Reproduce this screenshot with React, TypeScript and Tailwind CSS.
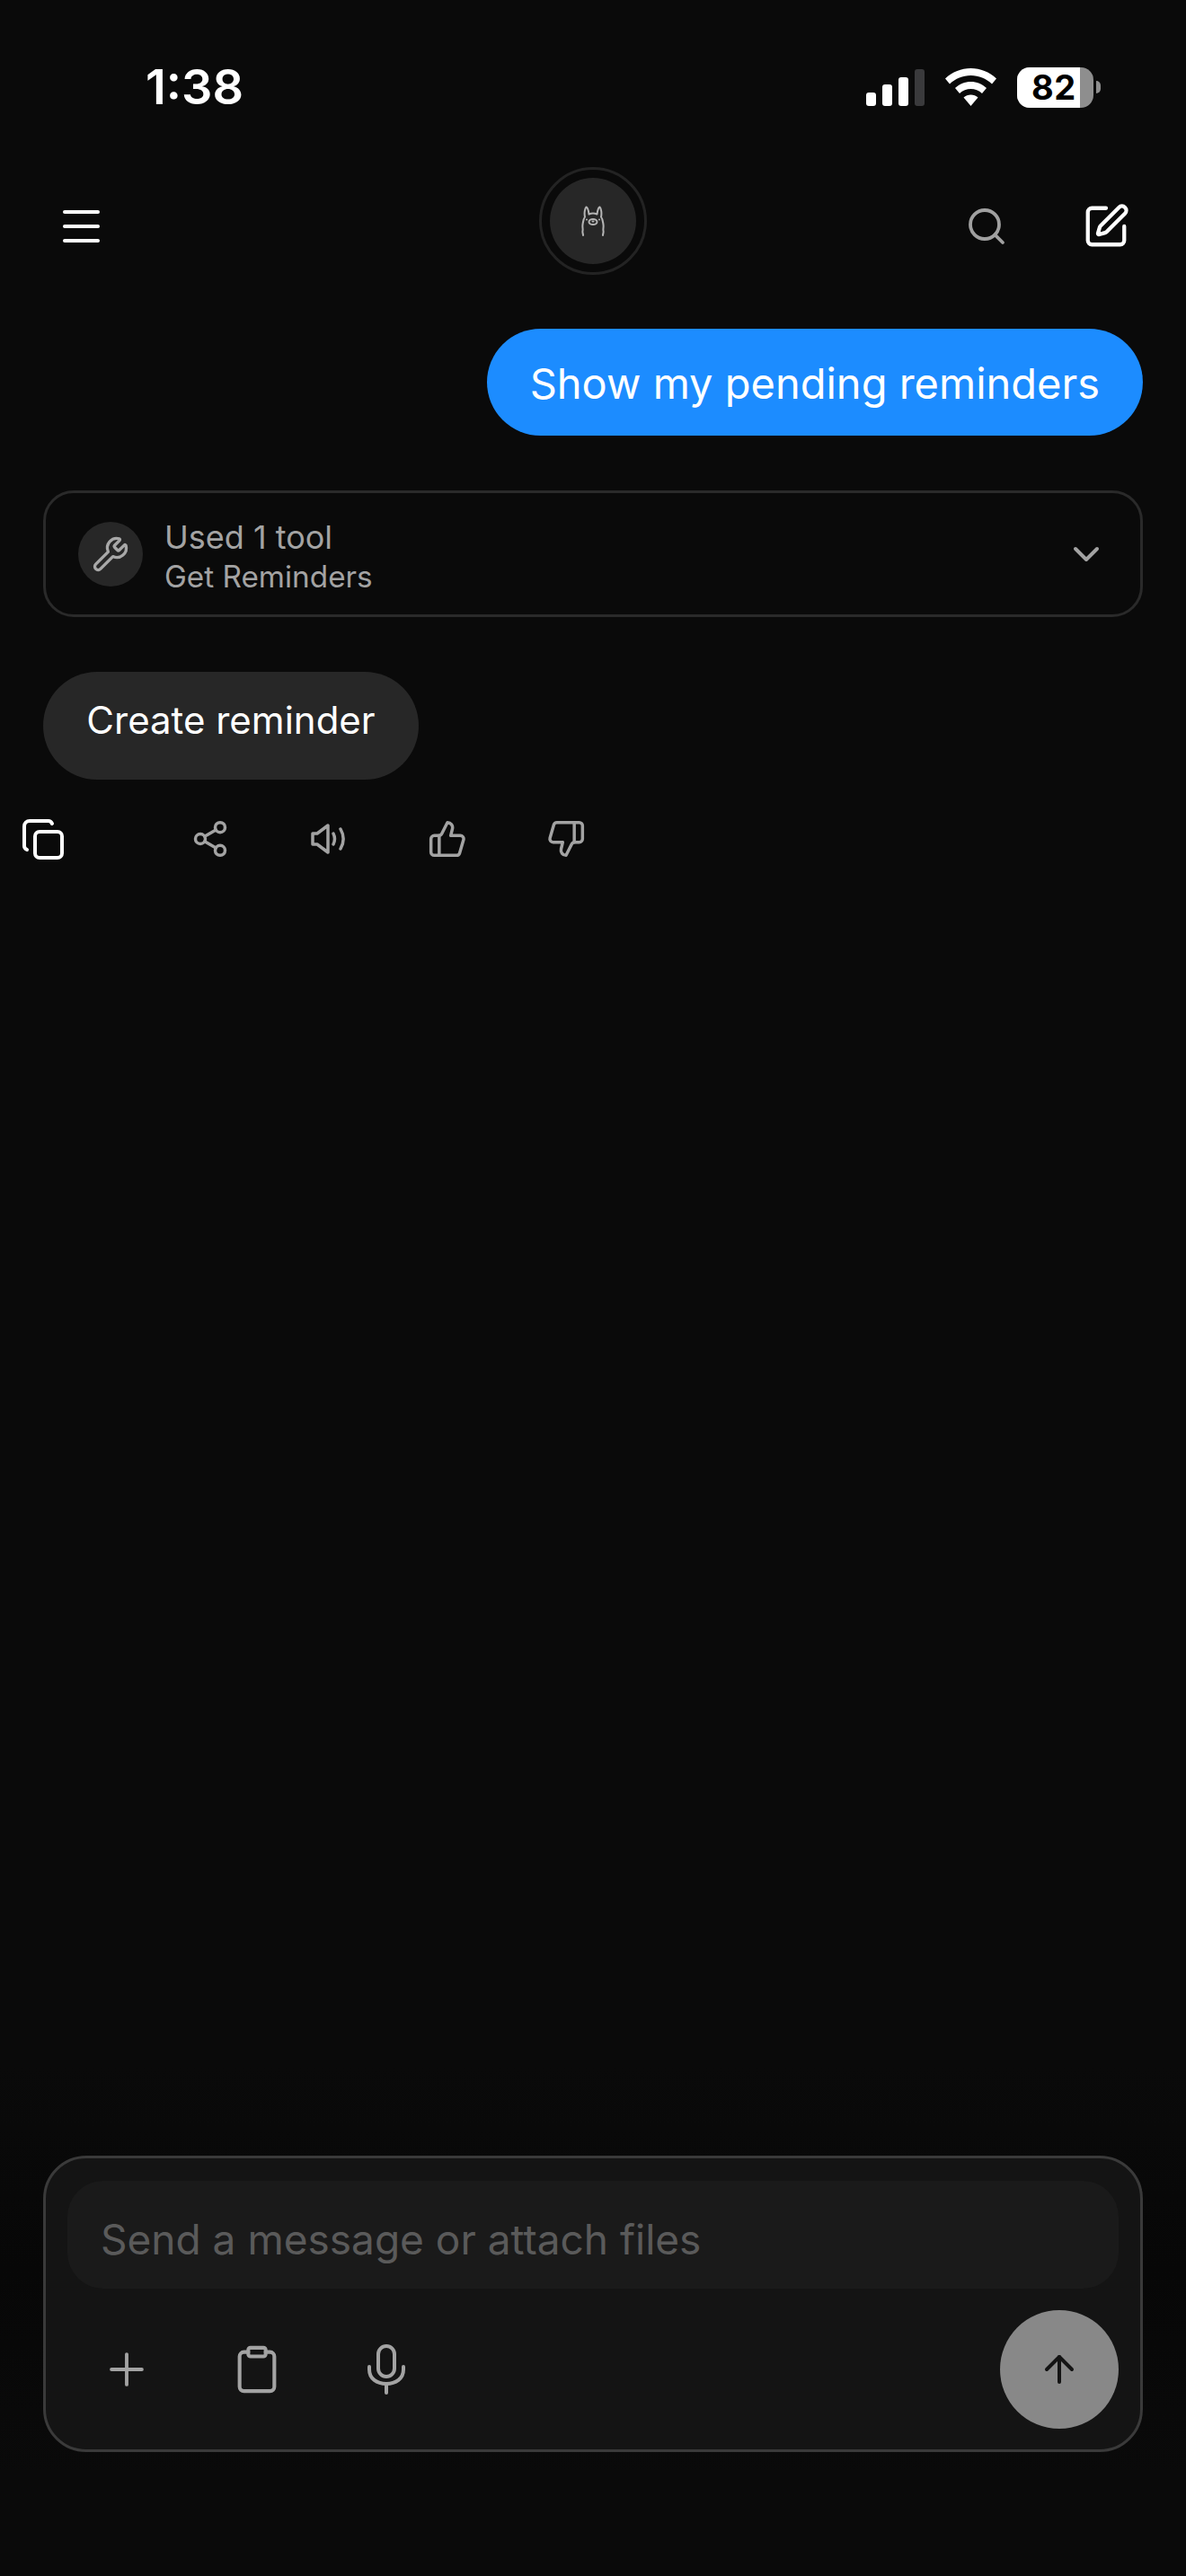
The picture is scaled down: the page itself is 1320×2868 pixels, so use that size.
import { ArrowUp, ChevronDown, Clipboard, Plus, Search, Share2, SquarePen, ThumbsDown, ThumbsUp, Wrench } from 'lucide-react';

function SignalBars() {
  return (
    <div className="flex items-end gap-[7px] h-[41px]">
      <div className="w-[11px] h-[15px] rounded-[3px] bg-white" />
      <div className="w-[11px] h-[24px] rounded-[3px] bg-white" />
      <div className="w-[11px] h-[32px] rounded-[3px] bg-white" />
      <div className="w-[11px] h-[41px] rounded-[3px] bg-[#3a3a3c]" />
    </div>
  );
}

function WifiIcon() {
  return (
    <svg width="57" height="42" viewBox="0 0 57 42" fill="white">
      <path d="M28.5 0C39 0 49 4 57 11.5L52 17.5C45.5 11.5 37.5 8 28.5 8S11.500 11.500 5 17.500L0 11.500C8 4 18 0 28.500 0Z" />
      <path d="M28.500 15C35 15 41 17.500 46 22L41 28C37.500 24.800 33 23 28.500 23S19.500 24.800 16 28L11 22C16 17.500 22 15 28.500 15Z" />
      <path d="M28.500 29.500C31.500 29.500 34.300 30.600 36.500 32.500L28.500 42L20.500 32.500C22.700 30.600 25.500 29.500 28.500 29.500Z" />
    </svg>
  );
}

function Battery() {
  return (
    <div className="flex items-center gap-[3px]">
      <div className="relative w-[85px] h-[45px] rounded-[14px] overflow-hidden bg-[#8e8e8e]">
        <div className="w-[70px] h-full bg-white" />
        <span className="absolute left-[16px] top-0 h-full flex items-center text-[38px] font-bold text-black leading-none tracking-[0.5px]">82</span>
      </div>
      <div className="w-[5px] h-[14px] rounded-r-full bg-[#8e8e8e]" />
    </div>
  );
}

function StatusBar() {
  return (
    <div className="h-[194px] flex items-center justify-between pl-[162px] pr-[95px]">
      <span className="text-[54px] leading-none font-semibold text-white">1:38</span>
      <div className="flex items-center">
        <SignalBars />
        <div className="ml-[23px]"><WifiIcon /></div>
        <div className="ml-[23px]"><Battery /></div>
      </div>
    </div>
  );
}

function Llama() {
  return (
    <svg width="26" height="34" viewBox="0 0 26 34" fill="none" stroke="#b5b5b5" strokeWidth="2" strokeLinecap="round" strokeLinejoin="round">
      <path d="M2 33c0-2-1-3-.5-5S1 24 1.500 21 2 15 4 12.500C3 8 4 3 5.500 1.500 7.500 2 8 6 8.500 9.500 11 8.500 15 8.500 17.500 9.500 18 6 19 2 20.500 1.500 22 3 23 8 22 12.500 24 15 24 18 24.500 21S24 26 24.500 28s-.5 3-.5 5" />
      <ellipse cx="13" cy="18" rx="4.500" ry="3" />
      <path d="M12.500 17.500h1" />
      <path d="M6 15.500h.01M20 15.500h.01" />
    </svg>
  );
}

function Header() {
  return (
    <div className="relative h-[110px] flex items-center justify-between pl-[70px] pr-[62px] mt-[1px]">
      <div className="flex flex-col gap-[12px] mt-[4px]">
        <div className="w-[41px] h-[4px] rounded-full bg-white" />
        <div className="w-[41px] h-[4px] rounded-full bg-white" />
        <div className="w-[41px] h-[4px] rounded-full bg-white" />
      </div>
      <div className="absolute left-[600px] top-[-9px] w-[120px] h-[120px] rounded-full border-[3px] border-[#232323] flex items-center justify-center">
        <div className="w-[96px] h-[96px] rounded-full bg-[#272727] flex items-center justify-center">
          <Llama />
        </div>
      </div>
      <div className="flex items-center gap-[82px] mt-[4px]">
        <Search size={48} strokeWidth={1.900} color="#a0a0a0" />
        <SquarePen size={54} strokeWidth={1.900} color="#ffffff" />
      </div>
    </div>
  );
}

function ToolCard() {
  return (
    <div className="mx-[48px] h-[141px] rounded-[34px] border-[3px] border-[#2a2a2a] flex items-center pl-[36px] pr-[36px]">
      <div className="w-[72px] h-[72px] rounded-full bg-[#272727] flex items-center justify-center">
        <Wrench size={42} strokeWidth={1.900} color="#a8a8a8" />
      </div>
      <div className="ml-[24px] flex-1 flex flex-col pt-[6px]">
        <span className="text-[36px] leading-[44px] text-[#a3a3a3]">Used 1 tool</span>
        <span className="text-[33.300px] leading-[44px] text-[#a3a3a3]">Get Reminders</span>
      </div>
      <ChevronDown size={48} strokeWidth={2} color="#a3a3a3" />
    </div>
  );
}

function CopyIcon() {
  return (
    <svg width="46" height="45" viewBox="0 0 46 45" fill="none" stroke="#ffffff" strokeWidth="4" strokeLinecap="round" strokeLinejoin="round">
      <rect x="14" y="14" width="30" height="29" rx="5" />
      <path d="M33 5c-1-2-2-3-4-3H8a6 6 0 0 0-6 6v22c0 2 1 3 3 4" />
    </svg>
  );
}

function SpeakerIcon() {
  return (
    <svg width="40" height="34" viewBox="0 0 40 34" fill="none" stroke="#a3a3a3" strokeWidth="3.500" strokeLinecap="round" strokeLinejoin="round">
      <path d="M2 11h5L19 2v30L7 23H2z" />
      <path d="M25 11c2 4 2 8 0 12" />
      <path d="M33 6c4 7 4 15 0 22" />
    </svg>
  );
}

function ActionRow() {
  return (
    <div className="flex items-center h-[44px] mt-[44px]">
      <div className="ml-[25px]"><CopyIcon /></div>
      <div className="ml-[97px] w-[132px] flex justify-center"><Share2 size={44} strokeWidth={1.900} color="#a3a3a3" /></div>
      <div className="w-[132px] flex justify-center"><SpeakerIcon /></div>
      <div className="w-[132px] flex justify-center"><ThumbsUp size={44} strokeWidth={1.900} color="#a3a3a3" /></div>
      <div className="w-[132px] flex justify-center"><ThumbsDown size={44} strokeWidth={1.900} color="#a3a3a3" /></div>
    </div>
  );
}

function MicIcon() {
  return (
    <svg width="42" height="56" viewBox="0 0 42 56" fill="none" stroke="#a3a3a3" strokeWidth="4" strokeLinecap="round">
      <rect x="12" y="2" width="18" height="34" rx="9" />
      <path d="M2 25v3c0 10.500 8.500 16 19 16s19-5.500 19-16v-3" />
      <path d="M21 44v10" />
    </svg>
  );
}

function Composer() {
  return (
    <div className="pt-[100px] pb-[24px] bg-linear-to-b from-[#0a0a0a] via-[#070707] to-[#0a0a0a]">
      <div className="mx-[48px] h-[330px] rounded-[48px] border-[3px] border-[#3a3a3a] bg-[#141414] px-[24px] pt-[25px]">
        <div className="h-[120px] rounded-[40px] bg-[#1a1a1a] flex items-center pl-[37px]">
          <span className="text-[46px] text-[#5a5a5a] mt-[10px]">Send a message or attach files</span>
        </div>
        <div className="flex items-center justify-between mt-[24px]">
          <div className="flex items-center">
            <Plus size={58} strokeWidth={1.600} color="#a3a3a3" className="ml-[37px]" />
            <Clipboard size={58} strokeWidth={1.700} color="#a3a3a3" className="ml-[87px]" />
            <div className="ml-[94px]"><MicIcon /></div>
          </div>
          <div className="w-[132px] h-[132px] rounded-full bg-[#888888] flex items-center justify-center">
            <ArrowUp size={48} strokeWidth={2} color="#141414" />
          </div>
        </div>
      </div>
    </div>
  );
}

export default function App() {
  return (
    <div className="w-[1320px] h-[2868px] bg-[#0a0a0a] flex flex-col font-['Inter',sans-serif] overflow-hidden">
      <StatusBar />
      <Header />
      <div className="flex-1 flex flex-col">
        <div className="flex justify-end pr-[48px] mt-[61px]">
          <div className="h-[119px] rounded-full bg-[#1c8cff] flex items-center px-[48px]">
            <span className="text-[47px] text-white whitespace-nowrap mt-[3px]">Show my pending reminders</span>
          </div>
        </div>
        <div className="h-[61px]" />
        <ToolCard />
        <div className="ml-[48px] mt-[61px] w-[418px] h-[120px] rounded-full bg-[#272727] flex items-center justify-center">
          <span className="text-[42px] text-white whitespace-nowrap mt-[-13px]">Create reminder</span>
        </div>
        <ActionRow />
      </div>
      <Composer />
      <div className="h-[114px]" />
    </div>
  );
}
